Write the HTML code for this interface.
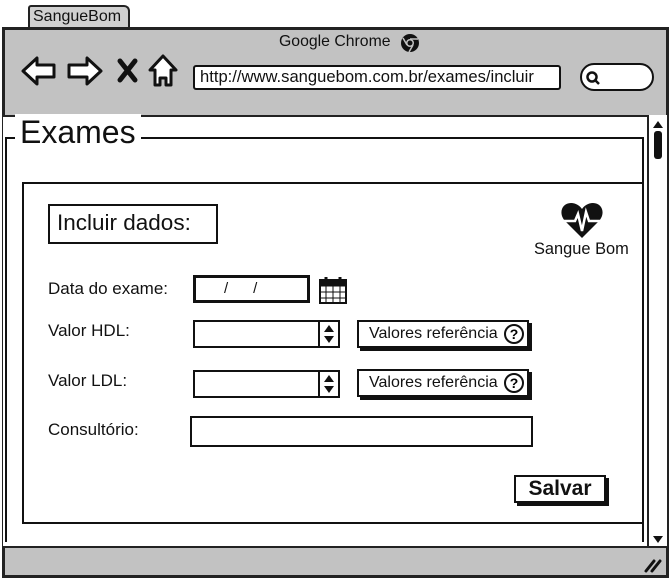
<!DOCTYPE html>
<html><head><meta charset="utf-8"><style>
*{margin:0;padding:0;box-sizing:border-box}
body{width:670px;height:580px;background:#fff;position:relative;overflow:hidden;font-family:"Liberation Sans",sans-serif;color:#111}
.a{position:absolute}
.box{position:absolute;border:2px solid #111;background:#fff}
.t{position:absolute;white-space:nowrap}
.btn{position:absolute;border:2px solid #111;background:#fff;box-shadow:3px 3px 0 #111;font-size:15px;text-align:center}
</style></head><body>
<div class="a" style="left:28px;top:5px;width:102px;height:24px;background:#d0d0d0;border:2px solid #222;border-bottom:none;border-radius:3px 6px 0 0"></div>
<div class="t" style="left:33px;top:8px;font-size:16px">SangueBom</div>
<div class="a" style="left:2px;top:27px;width:667px;height:551px;border:3px solid #222;background:#c2c2c2"></div>
<div class="t" style="left:279px;top:33px;font-size:15.8px">Google Chrome</div>
<svg class="a" style="left:400px;top:33px" width="20" height="20" viewBox="0 0 20 20"><circle cx="10" cy="10" r="9" fill="#111"/><circle cx="10" cy="10" r="4" fill="#c2c2c2"/><circle cx="10" cy="10" r="2.5" fill="#111"/><path d="M10 6 L18 6 M7 12 L3 5 M13 12 L9 19" stroke="#c2c2c2" stroke-width="1.5"/></svg>
<svg class="a" style="left:18px;top:52px" width="170" height="38" viewBox="0 0 170 38">
<path d="M5 19 L19 6 L19 13 L36 13 L36 25 L19 25 L19 32 Z" fill="#fff" stroke="#111" stroke-width="3" stroke-linejoin="round"/>
<path d="M83 19 L69 6 L69 13 L51 13 L51 25 L69 25 L69 32 Z" fill="#fff" stroke="#111" stroke-width="3" stroke-linejoin="round"/>
<path d="M102 9 L117 28 M117 9 L102 28" stroke="#111" stroke-width="5" stroke-linecap="round"/>
<path d="M145 4 L158 18 L153 18 L153 33 L148 33 L148 26 L142 26 L142 33 L137 33 L137 18 L132 18 Z" fill="#fff" stroke="#111" stroke-width="3" stroke-linejoin="round"/>
</svg>
<div class="box" style="left:193px;top:65px;width:368px;height:25px;border-radius:3px"></div>
<div class="t" style="left:200px;top:67px;font-size:16.6px">http://www.sanguebom.com.br/exames/incluir</div>
<div class="box" style="left:580px;top:63px;width:74px;height:28px;border-radius:14px"></div>
<svg class="a" style="left:585px;top:70px" width="16" height="16"><circle cx="7" cy="7" r="4.5" fill="none" stroke="#111" stroke-width="2.5"/><path d="M10 10 L14 14" stroke="#111" stroke-width="2.5"/></svg>
<div class="a" style="left:3px;top:115px;width:645px;height:432px;background:#fff;border-top:2px solid #222"></div>
<div class="a" style="left:647px;top:115px;width:20px;height:432px;background:#fff;border-left:2px solid #222"></div>
<svg class="a" style="left:650px;top:118px" width="16" height="430"><path d="M3 10 L8 3 L13 10 Z" fill="#111"/><rect x="4" y="13" width="8" height="28" rx="3" fill="#111"/><path d="M3 418 L8 425 L13 418 Z" fill="#111"/></svg>
<div class="a" style="left:3px;top:546px;width:664px;height:2px;background:#222"></div>
<svg class="a" style="left:640px;top:555px" width="24" height="20"><path d="M6 16 L14 6 M12 16 L20 6" stroke="#111" stroke-width="3" stroke-linecap="round"/></svg>
<div class="a" style="left:5px;top:137px;width:639px;height:405px;border:2px solid #111;border-bottom:none"></div>
<div class="t" style="left:15px;top:114px;font-size:32px;background:#fff;padding:0 5px">Exames</div>
<div class="box" style="left:22px;top:182px;width:622px;height:342px"></div>
<div class="box" style="left:48px;top:204px;width:170px;height:40px"></div>
<div class="t" style="left:57px;top:210px;font-size:22.5px">Incluir dados:</div>
<svg class="a" style="left:560px;top:202px" width="44" height="38" viewBox="0 0 44 38"><path d="M22 36 L5 19 C-2 11 2 1 11 1 C16 1 20 4 22 7 C24 4 28 1 33 1 C42 1 46 11 39 19 Z" fill="#111"/><path d="M2 19 L15 19 L18 12 L22 29 L26 10 L29 19 L42 19" fill="none" stroke="#fff" stroke-width="2.5"/></svg>
<div class="t" style="left:534px;top:240px;font-size:16.4px">Sangue Bom</div>
<div class="t" style="left:48px;top:279px;font-size:17px">Data do exame:</div>
<div class="t" style="left:48px;top:321px;font-size:17px">Valor HDL:</div>
<div class="t" style="left:48px;top:371px;font-size:17px">Valor LDL:</div>
<div class="t" style="left:48px;top:420px;font-size:17px">Consultório:</div>
<div class="box" style="left:193px;top:275px;width:117px;height:28px;border-width:3px"></div>
<div class="t" style="left:224px;top:280px;font-size:15px">/&nbsp;&nbsp;&nbsp;&nbsp;&nbsp;&nbsp;/</div>
<svg class="a" style="left:318px;top:275px" width="30" height="30"><rect x="2" y="5" width="26" height="23" fill="#fff" stroke="#111" stroke-width="2"/><path d="M2 11 H28 M2 17 H28 M2 23 H28 M8 11 V28 M15 11 V28 M22 11 V28" stroke="#111" stroke-width="1"/><rect x="2" y="5" width="26" height="6" fill="#111"/><path d="M8 7 V2 M22 7 V2" stroke="#111" stroke-width="3"/></svg>
<div class="box" style="left:193px;top:320px;width:147px;height:28px"></div>
<div class="a" style="left:318px;top:320px;width:22px;height:28px;border:2px solid #111;background:#fff"></div>
<svg class="a" style="left:320px;top:322px" width="18" height="24"><path d="M4 10 L9 3 L14 10 Z M4 14 L9 21 L14 14 Z" fill="#111"/></svg>
<div class="box" style="left:193px;top:370px;width:147px;height:28px"></div>
<div class="a" style="left:318px;top:370px;width:22px;height:28px;border:2px solid #111;background:#fff"></div>
<svg class="a" style="left:320px;top:372px" width="18" height="24"><path d="M4 10 L9 3 L14 10 Z M4 14 L9 21 L14 14 Z" fill="#111"/></svg>
<div class="btn" style="left:357px;top:320px;width:172px;height:28px;line-height:24px;text-align:left;padding-left:10px;font-size:16px">Valores referência</div>
<div class="btn" style="left:357px;top:369px;width:172px;height:28px;line-height:24px;text-align:left;padding-left:10px;font-size:16px">Valores referência</div>
<svg class="a" style="left:503px;top:323px" width="22" height="22"><circle cx="11" cy="11" r="9" fill="#fff" stroke="#111" stroke-width="2"/><text x="11" y="16" text-anchor="middle" font-size="14" font-weight="bold" font-family="Liberation Sans">?</text></svg>
<svg class="a" style="left:503px;top:372px" width="22" height="22"><circle cx="11" cy="11" r="9" fill="#fff" stroke="#111" stroke-width="2"/><text x="11" y="16" text-anchor="middle" font-size="14" font-weight="bold" font-family="Liberation Sans">?</text></svg>
<div class="box" style="left:190px;top:416px;width:343px;height:31px"></div>
<div class="btn" style="left:514px;top:475px;width:92px;height:28px;line-height:24px;font-size:21px;font-weight:bold">Salvar</div>
</body></html>
